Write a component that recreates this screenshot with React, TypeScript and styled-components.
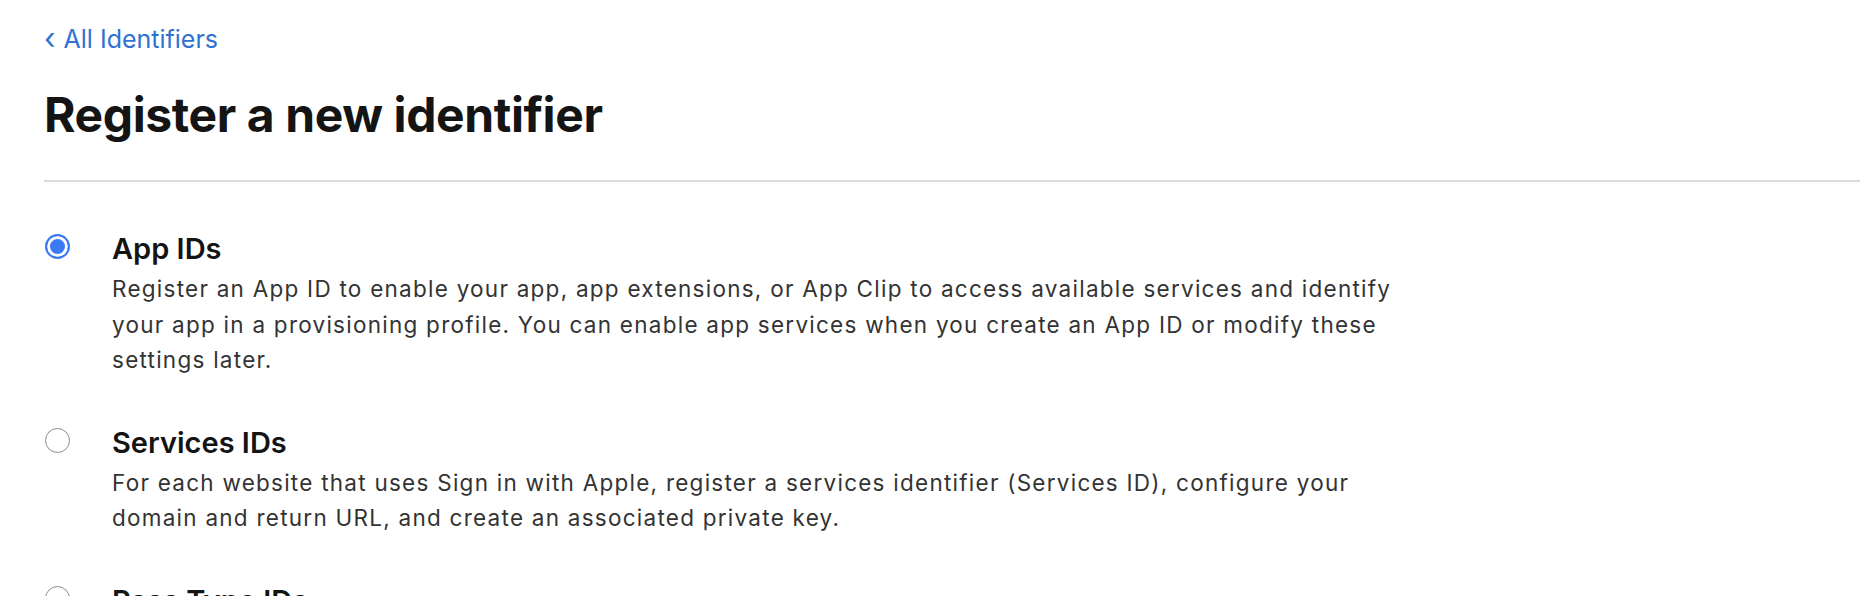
import React from "react";
import styled, { createGlobalStyle } from "styled-components";

const GlobalStyle = createGlobalStyle`
  body {
    margin: 0;
    background: #fff;
    font-family: Inter, "Noto Sans", sans-serif;
    -webkit-font-smoothing: antialiased;
  }
`;

const identifiers = [
  {
    id: "app",
    title: "App IDs",
    text: "Register an App ID to enable your app, app extensions, or App Clip to access available services and identify your app in a provisioning profile. You can enable app services when you create an App ID or modify these settings later.",
    checked: true,
  },
  {
    id: "services",
    title: "Services IDs",
    text: "For each website that uses Sign in with Apple, register a services identifier (Services ID), configure your domain and return URL, and create an associated private key.",
    checked: false,
  },
  {
    id: "pass",
    title: "Pass Type IDs",
    text: "Register a pass type identifier (Pass Type ID) for each kind of pass you create (i.e. gift cards).",
    checked: false,
  },
];

export default function App() {
  return (
    <>
      <GlobalStyle />
      <Page>
        <BackLink href="#">
          <Chevron>‹</Chevron>
          All Identifiers
        </BackLink>
        <Heading>Register a new identifier</Heading>
        <Divider />
        <List>
          {identifiers.map((item) => (
            <Option key={item.id}>
              <Radio $checked={item.checked} />
              <OptionBody>
                <OptionTitle>{item.title}</OptionTitle>
                <OptionText>{item.text}</OptionText>
              </OptionBody>
            </Option>
          ))}
        </List>
      </Page>
    </>
  );
}

const Page = styled.div`
  padding: 22px 0 0 44px;
  height: 596px;
  box-sizing: border-box;
  overflow: hidden;
`;

const BackLink = styled.a`
  display: inline-flex;
  align-items: center;
  gap: 8px;
  color: #2f72d2;
  text-decoration: none;
  font-size: 25px;
  line-height: 34px;
`;

const Chevron = styled.span`
  font-size: 30px;
  line-height: 34px;
  margin-top: -3px;
`;

const Heading = styled.h1`
  margin: 31px 0 0;
  font-size: 48px;
  line-height: 56px;
  font-weight: 700;
  color: #141414;
  letter-spacing: -0.4px;
`;

const Divider = styled.hr`
  margin: 37px 0 0;
  border: none;
  height: 2px;
  background: #dcdcdc;
`;

const List = styled.div`
  display: flex;
  flex-direction: column;
  gap: 45px;
  padding-top: 47px;
`;

const Option = styled.div`
  display: flex;
  align-items: flex-start;
`;

const Radio = styled.span<{ $checked: boolean }>`
  flex: none;
  width: 25px;
  height: 25px;
  margin: 5px 42px 0 1px;
  box-sizing: border-box;
  border-radius: 50%;
  border: ${(p) => (p.$checked ? "2px solid #3a7af2" : "1px solid #8c8c8c")};
  background: ${(p) => (p.$checked ? "#3a7af2" : "#fff")};
  box-shadow: ${(p) => (p.$checked ? "inset 0 0 0 3px #fff" : "none")};
`;

const OptionBody = styled.div`
  max-width: 1300px;
`;

const OptionTitle = styled.div`
  margin-bottom: 2px;
  font-size: 29px;
  line-height: 40px;
  font-weight: 600;
  color: #141414;
`;

const OptionText = styled.p`
  margin: 0;
  font-size: 22.5px;
  line-height: 35.6px;
  letter-spacing: 1.25px;
  color: #333;
`;
